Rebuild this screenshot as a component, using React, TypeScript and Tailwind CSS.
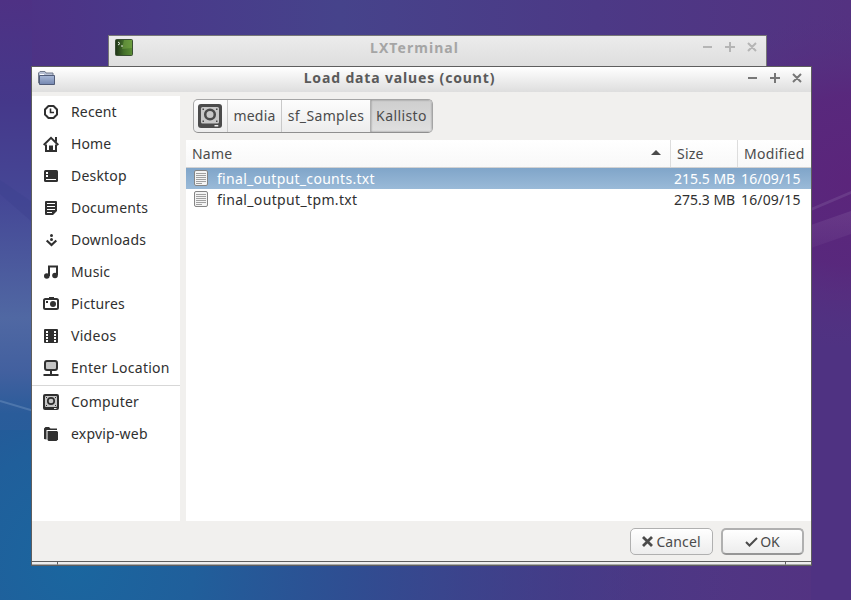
import React from "react";

type IconProps = { children: React.ReactNode };
function Ico({ children }: IconProps) {
  return (
    <svg width="16" height="16" viewBox="0 0 16 16" fill="none" className="shrink-0 text-[#303030]">
      {children}
    </svg>
  );
}

const places: { label: string; track: string; icon: React.ReactNode }[] = [
  { label: "Recent", track: "tracking-[0.15px]", icon: <><path d="M5.500 2h5L14 5.500v5L10.500 14h-5L2 10.500v-5z" stroke="currentColor" strokeWidth="2" strokeLinejoin="round" /><path d="M7.500 4.500V8.500H11" stroke="currentColor" strokeWidth="1.600" /></> },
  { label: "Home", track: "tracking-[0.1px]", icon: <><path d="M.7 9 8 1.800 15.300 9" stroke="currentColor" strokeWidth="2" /><path d="M12 1h2v5.500l-2-2z" fill="currentColor" /><path d="M3 8.500V15H13V8.500" stroke="currentColor" strokeWidth="2" /><path d="M6 9.500h4v6H6z" fill="currentColor" /></> },
  { label: "Desktop", track: "tracking-[0.2px]", icon: <><rect x="1" y="2" width="14" height="12" rx="1.500" fill="currentColor" /><path d="M3 4h2v2H3zM3 7h2v2H3zM3 11h10v1H3z" fill="#fff" /></> },
  { label: "Documents", track: "tracking-[0.2px]", icon: <><path d="M3 1h10a1 1 0 0 1 1 1v9l-4 4H3a1 1 0 0 1-1-1V2a1 1 0 0 1 1-1z" fill="currentColor" /><path d="M4 3.500h8M4 6.500h8M4 9.500h8M4 12.500h5" stroke="#fff" /></> },
  { label: "Downloads", track: "tracking-[0.2px]", icon: <><circle cx="8.500" cy="3.500" r="1.500" fill="currentColor" /><circle cx="8.500" cy="7.500" r="1.500" fill="currentColor" /><path d="m3.700 8.500 4.800 4.500 4.800-4.500" stroke="currentColor" strokeWidth="2.200" /></> },
  { label: "Music", track: "tracking-[0.15px]", icon: <><path d="M6 12V2.500h8V11" stroke="currentColor" strokeWidth="2" /><circle cx="3.800" cy="12" r="2.800" fill="currentColor" /><circle cx="12" cy="11.500" r="2.800" fill="currentColor" /></> },
  { label: "Pictures", track: "tracking-[0.15px]", icon: <><path d="M6 1h5v2H6z" fill="currentColor" /><rect x="1" y="3" width="14" height="10" rx="1.500" stroke="currentColor" strokeWidth="2" /><circle cx="10" cy="8" r="3" fill="currentColor" /><path d="M3 5h2v2H3z" fill="currentColor" /></> },
  { label: "Videos", track: "tracking-[0.3px]", icon: <><rect x="1" y="1" width="14" height="14" rx="1" fill="currentColor" /><path d="M4 3v11M12 3v11" stroke="#fff" strokeWidth="2" strokeDasharray="2 1" /></> },
  { label: "Enter Location", track: "tracking-[0.27px]", icon: <><rect x="2" y="1" width="12" height="9" rx="2" fill="#c4c4c4" stroke="currentColor" strokeWidth="2" /><path d="M8 10v4.500M.5 15h15" stroke="currentColor" strokeWidth="2" /></> },
  { label: "Computer", track: "tracking-[0.2px]", icon: <Drive /> },
  { label: "expvip-web", track: "tracking-[0.2px]", icon: <><path d="M1 13V2.500L2.500 1H6l1.500 1.500H14V4H3.500v9.500z" fill="currentColor" /><path d="M4.500 5H14l1 1v7.500L13.500 15H5.500l-1-1z" fill="currentColor" /></> },
];

function Drive() {
  return (
    <>
      <rect x="0" y="0" width="16" height="16" rx="2" fill="currentColor" />
      <rect x="2" y="2" width="12" height="11" rx="1" fill="#c8c8c8" />
      <circle cx="8" cy="7" r="3.200" stroke="currentColor" strokeWidth="1.700" />
      <path d="M3 3h1v1H3zM12 3h1v1h-1zM3 11h1v1H3zM12 11h1v1h-1z" fill="currentColor" />
      <path d="M11 14.500h2.500" stroke="#eee" />
    </>
  );
}

function Place({ i }: { i: number }) {
  return (
    <div className="flex h-8 items-center gap-3 pl-[11px]">
      <Ico>{places[i].icon}</Ico>
      <span className={"whitespace-nowrap " + places[i].track}>{places[i].label}</span>
    </div>
  );
}

function Controls() {
  return (
    <svg width="56" height="12" viewBox="0 0 56 12" fill="none" stroke="currentColor" strokeWidth="2" className="shrink-0">
      <path d="M1 6h9M23 6h10M28 1v10M46 2l8 8M54 2l-8 8" />
    </svg>
  );
}

function FileIcon() {
  return (
    <svg width="14" height="16" viewBox="0 0 14 16" fill="none" className="mb-[2px] shrink-0">
      <rect x=".5" y=".5" width="13" height="15" rx="1.500" fill="#f4f4f4" stroke="#858585" />
      <path d="M2 3.500h10M2 5.500h10M2 7.500h10M2 9.500h10M2 11.500h10M2 13.500h6" stroke="#a0a0a0" />
    </svg>
  );
}

function FileRow({ name, size, sel, track }: { name: string; size: string; sel?: boolean; track: string }) {
  return (
    <div className={"flex h-[21px] items-center pl-2 " + (sel ? "bg-linear-to-b from-[#80a5c9] to-[#9abad8] text-white" : "text-[#303030]")}>
      <FileIcon />
      <span className={"ml-[9px] flex-1 " + track}>{name}</span>
      <span className="w-[67px] whitespace-nowrap">{size}</span>
      <span className="w-[70px] whitespace-nowrap tracking-[0.15px]">16/09/15</span>
    </div>
  );
}

function Wallpaper() {
  return (
    <svg width="851" height="600" viewBox="0 0 851 600" className="absolute inset-0">
      <defs>
        <linearGradient id="base" x1="0" x2="1"><stop stopColor="#4e3184" /><stop offset=".18" stopColor="#49398a" /><stop offset=".4" stopColor="#46438b" /><stop offset=".7" stopColor="#4c3986" /><stop offset="1" stopColor="#543281" /></linearGradient>
        <linearGradient id="left" x1="0" x2="0" y1="0" y2="1"><stop stopColor="#4e3184" /><stop offset=".17" stopColor="#45388a" /><stop offset=".33" stopColor="#454796" /><stop offset=".53" stopColor="#5068a3" /><stop offset=".62" stopColor="#42609f" /><stop offset=".69" stopColor="#2a5c9a" /><stop offset="1" stopColor="#1e629d" /></linearGradient>
        <radialGradient id="blue" gradientUnits="userSpaceOnUse" cx="75" cy="565" r="660"><stop stopColor="#1a669f" /><stop offset=".18" stopColor="#205f9b" /><stop offset=".42" stopColor="#2e4e92" stopOpacity=".95" /><stop offset=".75" stopColor="#403c88" stopOpacity=".6" /><stop offset="1" stopColor="#4d3483" stopOpacity="0" /></radialGradient>
        <radialGradient id="glow" gradientUnits="userSpaceOnUse" cx="848" cy="180" r="170"><stop stopColor="#5b257b" /><stop offset=".5" stopColor="#59277c" stopOpacity=".9" /><stop offset="1" stopColor="#543281" stopOpacity="0" /></radialGradient>
        <linearGradient id="ray" x1="0" x2="0" y1="0" y2="1"><stop stopColor="#8460a0" stopOpacity=".32" /><stop offset="1" stopColor="#8460a0" stopOpacity=".12" /></linearGradient>
      </defs>
      <path fill="url(#base)" d="M0 0h851v600H0z" />
      <path fill="url(#blue)" d="M0 450h851v150H0z" />
      <path fill="url(#left)" d="M0 0h32v600H0z" />
      <path fill="url(#blue)" d="M0 430h32v170H0z" />
      <path fill="#4f3282" d="M811 300h40v300h-40z" />
      <path fill="url(#glow)" d="M760 0h91v400h-91z" />
      <path d="M0 180 32 202V222L0 194z" fill="#3d4290" fillOpacity=".5" />
      <path d="M0 401 34 411" stroke="#668bb9" strokeOpacity=".55" strokeWidth="2" />
      <path d="M811 208 851 191v3L811 211z" fill="#8460a0" fillOpacity=".35" />
      <path d="M811 225 851 211v23L811 248z" fill="url(#ray)" />
    </svg>
  );
}

export default function App() {
  return (
    <div className="relative h-[600px] w-[851px] overflow-hidden font-['Noto_Sans',sans-serif] text-[14px] leading-5 text-[#303030]">
      <Wallpaper />
      <div className="absolute left-[108px] top-[35px] flex h-[40px] w-[659px] items-start border border-[#777] bg-linear-to-b from-[#ececec] to-[#dadada] text-[#a5a5a5]">
        <svg width="18" height="17" viewBox="0 0 18 17" className="ml-[6px] mt-[3px]">
          <defs><linearGradient id="term" x1="0" x2="1"><stop stopColor="#1f3318" /><stop offset=".5" stopColor="#44702a" /><stop offset="1" stopColor="#5c8f35" /></linearGradient></defs>
          <rect x=".5" y=".5" width="17" height="16" rx="1" fill="url(#term)" stroke="#3a4f33" />
          <path d="M9 1h8v8L7 10z" fill="#87b650" fillOpacity=".4" />
          <path d="m3 3 2 1.500L3 6M6 7h2" fill="none" stroke="#e5ecdf" />
        </svg>
        <div className="flex-1 pr-[6px] pt-[2px] text-center font-bold tracking-[1.05px]">LXTerminal</div>
        <div className="mr-2 mt-[5px] text-[#b5b5b5]"><Controls /></div>
      </div>
      <div className="absolute left-[31px] top-[66px] flex h-[500px] w-[781px] flex-col border border-[#5e5e5e] bg-[#f1f0ee]">
        <div className="flex h-[25px] shrink-0 items-center bg-linear-to-b from-white to-[#dedede] text-[#5a5a5a]">
          <svg width="17" height="14" viewBox="0 0 17 14" className="mb-[4px] ml-[6px]">
            <defs><linearGradient id="fold" x1="0" x2="0" y1="0" y2="1"><stop stopColor="#aab9d8" /><stop offset="1" stopColor="#7487b0" /></linearGradient></defs>
            <path d="M.5 12V2L2 .500h5L8 2h7v10z" fill="#b7c0d4" stroke="#737b8c" />
            <path d="M2 3h4v1H2z" fill="#fff" />
            <path d="M1.500 4.500h15v9h-15z" fill="url(#fold)" stroke="#515c78" />
          </svg>
          <div className="flex-1 pb-[3px] pr-[3px] text-center font-bold tracking-[0.85px]">Load data values (count)</div>
          <div className="mb-[3px] mr-2 text-[#777]"><Controls /></div>
        </div>
        <div className="flex h-[429px] shrink-0 pt-1">
          <div className="mr-[6px] w-[148px] shrink-0 bg-white">
            {[0, 1, 2, 3, 4, 5, 6, 7, 8].map((i) => <Place key={i} i={i} />)}
            <div className="mt-px h-px bg-[#d7d7d7]" />
            {[9, 10].map((i) => <Place key={i} i={i} />)}
          </div>
          <div className="flex flex-1 flex-col">
            <div className="h-11 pl-[7px] pt-[3px]">
              <div className="flex h-[34px] w-[240px] overflow-hidden rounded-[5px] border border-[#a5a5a5] border-b-[#8f8f8f] bg-linear-to-b from-[#fdfdfd] to-[#ededed] text-[#4b4b4b]">
                <div className="flex w-[34px] items-center justify-center border-r border-[#c9c9c9] pr-px"><svg width="24" height="24" viewBox="0 0 16 16" fill="none"><Drive /></svg></div>
                <div className="flex w-[54px] items-center justify-center border-r border-[#c9c9c9] tracking-[0.2px]">media</div>
                <div className="flex w-[89px] items-center justify-center border-r border-[#b0b0b0] tracking-[0.35px]">sf_Samples</div>
                <div className="flex flex-1 items-center justify-center bg-linear-to-b from-[#cecece] to-[#e0e0e0] tracking-[0.4px] shadow-[inset_0_0_2px_#777]">Kallisto</div>
              </div>
            </div>
            <div className="flex-1 bg-white">
              <div className="flex h-7 items-center border-b border-[#d2d2d2] bg-linear-to-b from-white to-[#f8f8f8] text-[#4b4b4b]">
                <span className="flex-1 pl-1.5 tracking-[0.2px]">Name</span>
                <svg width="10" height="5" className="mb-[2px] mr-[9px]"><path d="m0 5 5-5 5 5z" fill="#4b4b4b" /></svg>
                <span className="flex h-full w-[67px] items-center border-l border-[#ddd] pl-1.5 tracking-[0.2px]">Size</span>
                <span className="flex h-full w-[74px] items-center border-l border-[#ddd] pl-1.5 tracking-[0.3px]">Modified</span>
              </div>
              <FileRow name="final_output_counts.txt" size="215.5 MB" sel track="tracking-[0.3px]" />
              <FileRow name="final_output_tpm.txt" size="275.3 MB" track="tracking-[0.35px]" />
            </div>
          </div>
        </div>
        <div className="flex flex-1 items-start justify-end gap-2 pr-[7px] pt-[7px] text-[#4b4b4b]">
          <div className="flex h-[27px] w-[83px] items-center justify-center gap-[3px] rounded-[5px] border border-[#b0b0b0] bg-linear-to-b from-white to-[#ededed] tracking-[0.1px]">
            <svg width="11" height="11" viewBox="0 0 11 11" stroke="currentColor" strokeWidth="2.800"><path d="m1 1 9 9M10 1 1 10" /></svg>Cancel
          </div>
          <div className="flex h-[27px] w-[83px] items-center justify-center gap-[2px] rounded-[5px] border-2 border-[#b0b0b0] border-b-[#969696] bg-linear-to-b from-white to-[#ededed]">
            <svg width="13" height="10" viewBox="0 0 13 10" fill="none" stroke="currentColor" strokeWidth="2"><path d="m1 5 3.500 3.500L12 1" /></svg>OK
          </div>
        </div>
        <div className="flex h-1 shrink-0 border-t border-[#5e5e5e] bg-[#eee]"><div className="w-[26px] border-b border-r border-b-[#aaa] border-r-[#5e5e5e]" /><div className="flex-1 border-b border-[#aaa]" /><div className="w-[26px] border-b border-l border-b-[#aaa] border-l-[#5e5e5e]" /></div>
      </div>
    </div>
  );
}
